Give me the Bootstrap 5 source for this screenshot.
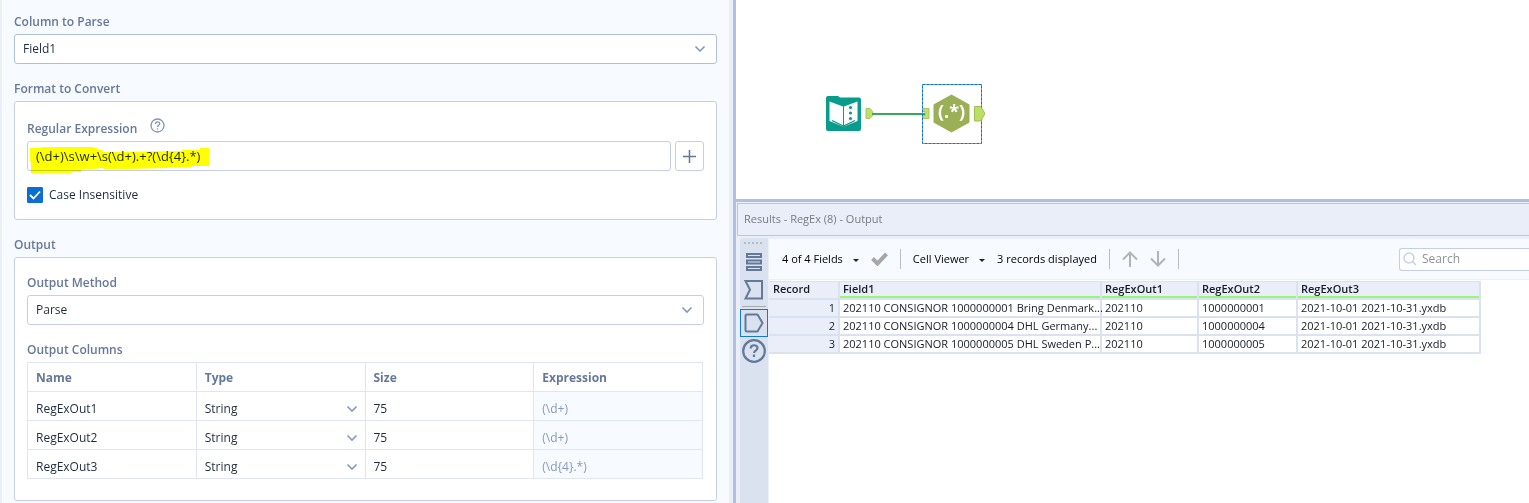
<!DOCTYPE html>
<html lang="en">
<head>
<meta charset="utf-8">
<meta name="viewport" content="width=device-width, initial-scale=1">
<title>RegEx - Configuration</title>
<link href="https://cdn.jsdelivr.net/npm/bootstrap@5.3.0/dist/css/bootstrap.min.css" rel="stylesheet">
<style>
  :root { --edge: #c5cfe4; --slate: #66789a; --ink: #1f2c40; --rail: #dbe2ef; --frame: #e9eef9; --pane: #f7faff; --split: #b0bfe0; }
  body { font-family: "Open Sans", "Noto Sans", sans-serif; font-size: 12px; line-height: 20px; color: var(--ink); background: #fff; }
  .workspace { display: grid; grid-template-columns: 736fr 793fr; min-height: 100vh; }
  .config { background: var(--pane); border-left: 2px solid var(--frame); border-right: 3px solid var(--split); }
  .config-body { padding: 11px 12px 2px; border-right: 4px solid var(--frame); min-height: 100%; }
  .caption { display: block; color: var(--slate); font-weight: 600; font-size: 12px; line-height: 22px; margin: 0 0 1px; }
  .section + .section { margin-top: 14px; }
  .panel { background: #fff; border: 1px solid var(--edge); border-radius: 3px; padding: 16px 12px 14px; }
  .panel-output { padding: 14px 12px 21px; }
  .form-control, .form-select { font-size: 12px; line-height: 20px; height: 30px; padding: 4px 8px; border: 1px solid var(--edge); border-radius: 3px; color: var(--ink); background-color: #fff; }
  .form-select { background-image: url("data:image/svg+xml,%3Csvg xmlns='http://www.w3.org/2000/svg' viewBox='0 0 12 12'%3E%3Cpath d='M1.5 3.5 6 8l4.500-4.500' fill='none' stroke='%238799bf' stroke-width='1.600'/%3E%3C/svg%3E"); background-size: 12px 12px; background-position: right 10px center; }
  .select-main { border-color: #afbedb; }
  .pattern { font-size: 13px; }
  .btn-add { flex: none; width: 29px; height: 30px; padding: 0; border: 1px solid var(--edge); border-radius: 3px; background: #fff; display: grid; place-items: center; }
  .marker { position: absolute; left: 3px; top: 6px; mix-blend-mode: multiply; pointer-events: none; }
  .choice { margin-top: 14px; gap: 6px; }
  .form-check-input { width: 16px; height: 16px; margin: 0; background-size: 16px 16px; }
  .form-check-input[type=checkbox] { border-radius: 1px; }
  .form-check-input:checked[type=checkbox] { background-color: #0a6fd0; border-color: #0a6fd0; background-image: url("data:image/svg+xml,%3Csvg xmlns='http://www.w3.org/2000/svg' viewBox='0 0 16 16'%3E%3Cpath d='m3 8 3.500 3.500L13 4.500' fill='none' stroke='%23fff' stroke-width='1.800'/%3E%3C/svg%3E"); }
  .columns { table-layout: fixed; border-collapse: collapse; width: calc(100% - 1px); }
  .columns th, .columns td { height: 29px; border: 1px solid #dfe5f1; padding: 0; }
  .columns th { color: var(--slate); font-weight: 700; padding: 2px 8px 0; }
  .columns .form-control, .columns .form-select { height: 28px; border: 0; padding: 6px 8px 2px; border-radius: 0; background-color: transparent; }
  .columns .form-select { padding: 7px 8px 1px; background-position: right 7px top 11px; }
  .columns td:last-child { background: var(--pane); }
  .columns td:last-child .form-control { color: #8899bb; }
  .canvas { padding: 84px 89px 55px; border-bottom: 3px solid var(--split); }
  .results { background: var(--frame); padding: 1px 0 0 1px; }
  .results-title { height: 33px; border: 1px solid #c3c5c9; border-right: 0; color: #777b82; font-size: 11px; line-height: 30px; padding-left: 6px; font-weight: 400; margin: 0; }
  .rail { flex: none; width: 28px; background: var(--rail); margin: 2px 1px 0 3px; border-radius: 3px 0 0 0; }
  .rail button { width: 28px; height: 28px; border: 1px solid transparent; background: none; padding: 0; display: grid; place-items: center; }
  .rail .selected { border-color: #0f7bd6; }
  .grip { width: 18px; height: 2px; margin: 4px 0 4px 4px; background: repeating-linear-gradient(90deg, #b4bac6 0 2px, transparent 2px 4px); }
  .rail hr { margin: 2px 2px; border-color: #a3a9b5; opacity: 1; }
  .toolbar { height: 41px; background: var(--pane); border-bottom: 1px solid #eceff7; margin-top: 3px; color: #000; font-size: 11px; padding-left: 13px; gap: 12px; }
  .toolbar button { border: 0; background: none; padding: 0; color: inherit; line-height: 20px; }
  .rule { width: 1px; height: 20px; background: #b9bdc5; }
  .caret { width: 0; border: 3px solid transparent; border-top-color: #222; border-bottom: 0; display: inline-block; vertical-align: middle; margin-left: 10px; }
  .finder { margin-left: auto; width: 130px; height: 23px; border: 1px solid var(--edge); border-right: 0; border-radius: 3px 0 0 3px; background: #fff; padding-left: 3px; gap: 5px; }
  .finder input { border: 0; outline: 0; min-width: 0; flex: 1; padding: 0; font-size: 12px; line-height: 20px; background: none; }
  .finder input::placeholder { color: #8e9299; }
  .sheet { background: #fff; padding-top: 1px; }
  .grid { table-layout: fixed; border-collapse: separate; border-spacing: 0; width: 712px; font-size: 11px; line-height: 16px; color: #161d28; }
  .grid th, .grid td { padding: 0 0 0 3px; height: 18px; border-right: 2px solid var(--rail); border-bottom: 2px solid var(--rail); white-space: nowrap; }
  .grid thead th { height: 19px; line-height: 14px; vertical-align: top; background: var(--frame); border-top: 1px solid var(--rail); font-weight: 600; }
  .grid thead th:first-child { padding-left: 4px; }
  .grid thead th + th { box-shadow: inset 0 -2px #98f774; }
  .grid tbody th { background: var(--frame); font-weight: 400; text-align: right; padding-right: 3px; }
</style>
</head>
<body>
<main class="workspace">
  <form class="config">
    <div class="config-body">
      <section class="section">
        <label class="caption" for="source">Column to Parse</label>
        <select id="source" class="form-select select-main"><option>Field1</option></select>
      </section>
      <section class="section">
        <h2 class="caption">Format to Convert</h2>
        <div class="panel">
          <div class="d-flex align-items-start">
            <label class="caption" for="regex">Regular Expression</label>
            <svg class="ms-2" width="24" height="15" viewBox="0 0 24 15" fill="none" stroke="#8395bb" stroke-width="1.300"><circle cx="12.500" cy="7.500" r="6.500"/><path d="M10.500 6c0-3 4.200-2.700 4.200-.3C14.700 7.300 12.500 7.200 12.500 9M12.500 10.200v1.400"/></svg>
          </div>
          <div class="d-flex gap-1 position-relative">
            <input id="regex" class="form-control pattern" value="(\d+)\s\w+\s(\d+).+?(\d{4}.*)">
            <button type="button" class="btn-add" aria-label="Insert expression"><svg width="15" height="15" stroke="#647590" stroke-width="1.500"><path d="M7.500 1v13M1 7.500h13"/></svg></button>
            <svg class="marker" width="180" height="27"><path fill="#ff0" d="M0 1h11V0h51l5 1v2h5l2 2 78-1V3h18V1h9v18h-18v1h-17l-6 1-40 1H73v-1l-22 2v2H41v1H1V15H0z"/></svg>
          </div>
          <div class="choice d-flex align-items-center">
            <input class="form-check-input" type="checkbox" id="nocase" checked>
            <label for="nocase">Case Insensitive</label>
          </div>
        </div>
      </section>
      <section class="section">
        <h2 class="caption">Output</h2>
        <div class="panel panel-output">
          <div class="section">
            <label class="caption" for="method">Output Method</label>
            <select id="method" class="form-select"><option>Parse</option></select>
          </div>
          <div class="section">
            <h3 class="caption">Output Columns</h3>
            <table class="columns">
              <thead><tr><th>Name</th><th>Type</th><th>Size</th><th>Expression</th></tr></thead>
              <tbody>
                <tr><td><input class="form-control" aria-label="Name" value="RegExOut1"></td><td><select class="form-select" aria-label="Type"><option>String</option></select></td><td><input class="form-control" aria-label="Size" value="75"></td><td><input class="form-control" aria-label="Expression" value="(\d+)" readonly></td></tr>
                <tr><td><input class="form-control" aria-label="Name" value="RegExOut2"></td><td><select class="form-select" aria-label="Type"><option>String</option></select></td><td><input class="form-control" aria-label="Size" value="75"></td><td><input class="form-control" aria-label="Expression" value="(\d+)" readonly></td></tr>
                <tr><td><input class="form-control" aria-label="Name" value="RegExOut3"></td><td><select class="form-select" aria-label="Type"><option>String</option></select></td><td><input class="form-control" aria-label="Size" value="75"></td><td><input class="form-control" aria-label="Expression" value="(\d{4}.*)" readonly></td></tr>
              </tbody>
            </table>
          </div>
        </div>
      </section>
    </div>
  </form>

  <div class="d-flex flex-column overflow-hidden">
    <div class="canvas">
      <svg class="d-block" width="162" height="60" viewBox="0 0 162 60">
        <path d="M1 14q0-2 2-2h10l2 1.500h19q2 0 2 2V45q0 2-2 2H3q-2 0-2-2z" fill="#079c8b"/>
        <path d="M4.500 17.500 18 22.500v20L4.500 37zM32.500 17.500 19 22.500v20L32.500 37z" fill="#fff"/>
        <path d="M7 36.500 18.500 42 30 36.500" fill="none" stroke="#079c8b" stroke-width="1.300"/>
        <g fill="#079c8b"><circle cx="25.500" cy="23.500" r="1.600"/><circle cx="25.500" cy="29" r="1.600"/><circle cx="25.500" cy="34.500" r="1.600"/></g>
        <path d="M41 24.500h4l2.500 3v4l-2.500 3h-4z" fill="#bfe06c" stroke="#a4cc55"/>
        <path d="M98 24.500h6v10h-6v-3h2v-4h-2z" fill="#bfe06c" stroke="#a4cc55"/>
        <path d="M47 30h53" stroke="#39a852" stroke-width="2"/>
        <path d="M126.500 10.500 144.500 20.500v18l-18 10-18-10v-18z" fill="#9bb056"/>
        <text x="126.500" y="34" text-anchor="middle" font-family="Open Sans, sans-serif" font-weight="700" font-size="18" fill="#fff">(.*)</text>
        <rect x="97.500" y=".5" width="59" height="59" fill="none" stroke="#9fccf0"/>
        <rect x="97.500" y=".5" width="59" height="59" fill="none" stroke="#0874cf" stroke-dasharray="3 1"/>
        <path d="M149.500 22.500h6l4 6v2l-4 6.500h-6z" fill="#bade66" stroke="#9cc04c"/>
      </svg>
    </div>
    <section class="results flex-grow-1 d-flex flex-column">
      <h2 class="results-title">Results - RegEx (8) - Output</h2>
      <div class="d-flex flex-grow-1">
        <nav class="rail" aria-label="Result views">
          <div class="grip"></div>
          <button aria-label="Messages"><svg width="18" height="20" fill="none" stroke="#64789a" stroke-width="2"><path d="M2 2h14v3H2zM2 8.500h14v3H2zM2 15h14v3H2z"/></svg></button>
          <button aria-label="Input"><svg width="20" height="20" fill="none" stroke="#64789a" stroke-width="2"><path d="M1.500 1h16.500v17.500H1.500L6 9.700z"/></svg></button>
          <hr>
          <button class="selected" aria-label="Output"><svg width="20" height="20" fill="none" stroke="#64789a" stroke-width="2" stroke-linejoin="round"><path d="M3 1.500h10.500L18.500 10l-5 8.500H3Q1.500 18.500 1.500 17V3Q1.500 1.500 3 1.500z"/></svg></button>
          <button aria-label="Help"><svg width="24" height="24" fill="none" stroke="#64789a" stroke-width="2.200"><circle cx="12" cy="12" r="10.800"/><path d="M8.700 9.500c0-4.500 6.800-4 6.800-.5 0 2.500-3.400 2.300-3.400 5M12 15.500v2.600"/></svg></button>
        </nav>
        <div class="flex-grow-1 d-flex flex-column overflow-hidden">
          <div class="toolbar d-flex align-items-center">
            <button>4 of 4 Fields<span class="caret"></span></button>
            <button aria-label="Apply"><svg class="d-block" width="17" height="14" fill="none" stroke="#a6a6a6" stroke-width="4"><path d="M1.500 6.500 6.500 11.500 15.500 1.800"/></svg></button>
            <span class="rule"></span>
            <button>Cell Viewer<span class="caret"></span></button>
            <span>3 records displayed</span>
            <span class="rule"></span>
            <button aria-label="Previous"><svg class="d-block" width="16" height="16" fill="none" stroke="#b1b3b6" stroke-width="2"><path d="M8 16V1.500M1 8.500l7-7 7 7"/></svg></button>
            <button aria-label="Next"><svg class="d-block" width="16" height="16" fill="none" stroke="#b1b3b6" stroke-width="2"><path d="M8 0v14.500M1 7.500l7 7 7-7"/></svg></button>
            <span class="rule"></span>
            <label class="finder d-flex align-items-center">
              <svg width="14" height="14" fill="none" stroke="#c5d1e8" stroke-width="1.500"><circle cx="6" cy="6" r="5"/><path d="m9.500 9.500 3.500 3.500"/></svg>
              <input type="text" placeholder="Search" aria-label="Search">
            </label>
          </div>
          <div class="sheet flex-grow-1">
            <table class="grid">
              <colgroup><col style="width:71px"><col style="width:262px"><col style="width:97px"><col style="width:99px"><col style="width:183px"></colgroup>
              <thead><tr><th>Record</th><th>Field1</th><th>RegExOut1</th><th>RegExOut2</th><th>RegExOut3</th></tr></thead>
              <tbody>
                <tr><th>1</th><td>202110 CONSIGNOR 1000000001 Bring Denmark...</td><td>202110</td><td>1000000001</td><td>2021-10-01 2021-10-31.yxdb</td></tr>
                <tr><th>2</th><td>202110 CONSIGNOR 1000000004 DHL Germany...</td><td>202110</td><td>1000000004</td><td>2021-10-01 2021-10-31.yxdb</td></tr>
                <tr><th>3</th><td>202110 CONSIGNOR 1000000005 DHL Sweden P...</td><td>202110</td><td>1000000005</td><td>2021-10-01 2021-10-31.yxdb</td></tr>
              </tbody>
            </table>
          </div>
        </div>
      </div>
    </section>
  </div>
</main>
<script src="https://cdn.jsdelivr.net/npm/bootstrap@5.3.0/dist/js/bootstrap.bundle.min.js"></script>
</body>
</html>
